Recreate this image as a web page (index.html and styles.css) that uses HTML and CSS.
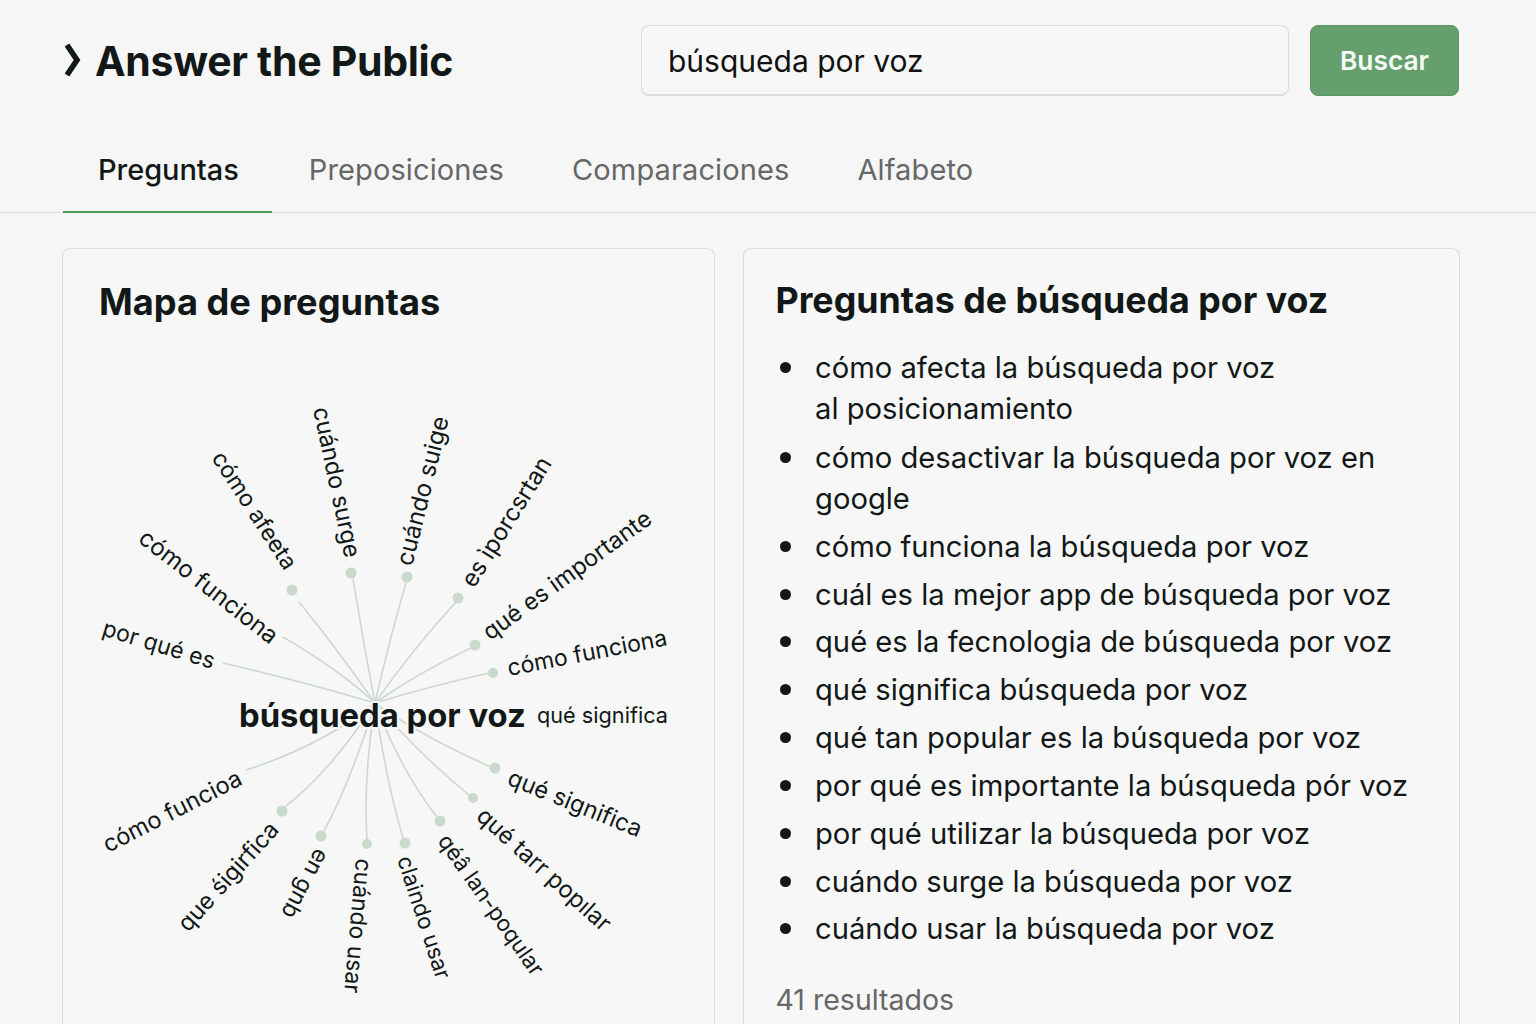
FILE: index.html
```html
<!DOCTYPE html>
<html lang="es">
<head>
<meta charset="utf-8">
<title>Answer the Public</title>
<link rel="stylesheet" href="styles.css">
</head>
<body>
<div class="page">
  <header class="topbar">
    <div class="brand">
      <svg class="brand-icon" viewBox="0 0 18 34" aria-hidden="true"><path d="M4 2 L14 17 L4 32"/></svg>
      <span class="brand-name">Answer the Public</span>
    </div>
    <form class="search">
      <div class="search-input">búsqueda por voz</div>
      <div class="search-btn">Buscar</div>
    </form>
  </header>
  <nav class="tabs">
    <a class="tab active">Preguntas</a>
    <a class="tab">Preposiciones</a>
    <a class="tab">Comparaciones</a>
    <a class="tab">Alfabeto</a>
  </nav>
  <main class="panels">
    <section class="card map-card">
      <h2 class="map-title">Mapa de preguntas</h2>
      <svg class="map" viewBox="63 340 650 690" aria-label="Mapa de preguntas">
        <g class="links">
          <path d="M374 702 Q330 640 298 601"/>
          <path d="M374 702 Q362 640 352 578"/>
          <path d="M374 702 Q388 640 405 582"/>
          <path d="M374 702 Q410 650 455 601"/>
          <path d="M374 702 Q420 670 470 647"/>
          <path d="M374 702 Q430 685 488 672"/>
          <path d="M374 702 Q340 670 282 636"/>
          <path d="M374 702 Q300 680 222 662"/>
          <path d="M374 702 Q320 745 245 769"/>
          <path d="M374 702 Q330 770 285 805"/>
          <path d="M374 702 Q350 780 323 830"/>
          <path d="M374 702 Q362 780 366 838"/>
          <path d="M374 702 Q385 780 402 837"/>
          <path d="M374 702 Q400 770 436 816"/>
          <path d="M374 702 Q420 755 468 794"/>
          <path d="M374 702 Q420 735 490 766"/>
        </g>
        <g class="dots">
          <circle cx="291" cy="589" r="5.5"/><circle cx="350" cy="572" r="5.5"/>
          <circle cx="406" cy="576" r="5.5"/><circle cx="457" cy="597" r="5.5"/>
          <circle cx="474" cy="644" r="5.5"/><circle cx="492" cy="672" r="5"/>
          <circle cx="494" cy="767" r="5.5"/><circle cx="472" cy="797" r="5"/>
          <circle cx="439" cy="820" r="5.5"/><circle cx="404" cy="842" r="5.5"/>
          <circle cx="366" cy="843" r="5"/><circle cx="320" cy="835" r="5.5"/>
          <circle cx="281" cy="810" r="5.5"/>
        </g>
        <g class="labels">
          <text transform="translate(210 457) rotate(57)">cómo afeeta</text>
          <text class="mid" transform="translate(312 408) rotate(78)">cuándo surge</text>
          <text class="wide" transform="translate(411 566) rotate(-76)">cuándo suige</text>
          <text class="wide" transform="translate(473 588) rotate(-58)">es ìporcsrtan</text>
          <text class="mid" transform="translate(489 640) rotate(-36)">qué es importante</text>
          <text transform="translate(508 675) rotate(-11)">cómo funciona</text>
          <text class="mid" transform="translate(505 783) rotate(22)">qué significa</text>
          <text class="mid" transform="translate(474 817) rotate(42)">qué tarr popılar</text>
          <text class="narrow" transform="translate(436 840) rotate(55)">qéâ lan-poqular</text>
          <text class="narrow" transform="translate(396 858) rotate(72)">claindo usar</text>
          <text transform="translate(355 857) rotate(95)">cuándo usar</text>
          <text transform="translate(315 846) rotate(118)">en gnb</text>
          <text class="mid" transform="translate(187 932) rotate(-48)">que śigirfica</text>
          <text class="mid" transform="translate(107 852) rotate(-27)">cómo funcioa</text>
          <text transform="translate(100 634) rotate(17)">por qué es</text>
          <text class="wide" transform="translate(136 540) rotate(38)">cómo funciona</text>
          <text class="flat" x="536" y="722">qué significa</text>
        </g>
        <text class="hub" x="238" y="726">búsqueda por voz</text>
      </svg>
    </section>
    <section class="card list-card">
      <h2 class="list-title">Preguntas de búsqueda por voz</h2>
      <ul class="questions">
        <li>cómo afecta la búsqueda por voz<br>al posicionamiento</li>
        <li>cómo desactivar la búsqueda por voz en google</li>
        <li>cómo funciona la búsqueda por voz</li>
        <li>cuál es la mejor app de búsqueda por voz</li>
        <li>qué es la fecnologia de búsqueda por voz</li>
        <li>qué significa búsqueda por voz</li>
        <li>qué tan popular es la búsqueda por voz</li>
        <li>por qué es importante la búsqueda pór voz</li>
        <li>por qué utilizar la búsqueda por voz</li>
        <li>cuándo surge la búsqueda por voz</li>
        <li>cuándo usar la búsqueda por voz</li>
      </ul>
      <p class="count">41 resultados</p>
    </section>
  </main>
</div>
</body>
</html>
```
FILE: styles.css
```css
* { box-sizing: border-box; }
html, body { margin: 0; padding: 0; }
body {
  background: #f5f6f5;
  color: #111817;
  font-family: Inter, "Noto Sans", sans-serif;
}
.page { height: 1024px; overflow: hidden; }

.topbar {
  display: flex;
  align-items: center;
  justify-content: space-between;
  padding: 24px 77px 0 63px;
  height: 96px;
}
.brand { display: flex; align-items: center; gap: 14px; }
.brand-icon { width: 18px; height: 34px; }
.brand-icon path { fill: none; stroke: #111817; stroke-width: 5.6; }
.brand-name { font-size: 41px; font-weight: 700; letter-spacing: -0.3px; line-height: 50px; padding-top: 2px; }

.search { display: flex; gap: 21px; }
.search-input {
  width: 648px;
  height: 71px;
  padding: 2px 26px 0;
  display: flex;
  align-items: center;
  border: 1px solid #dcdddc;
  border-bottom-width: 2px;
  border-radius: 8px;
  background: #f6f7f6;
  font-size: 30px;
  color: #111;
}
.search-btn {
  width: 149px;
  height: 71px;
  display: flex;
  align-items: center;
  justify-content: center;
  background: #669f6e;
  border: 1px solid #5b9563;
  border-radius: 8px;
  color: #f7faf7;
  font-size: 26.3px;
  font-weight: 600;
}

.tabs {
  display: flex;
  margin-top: 35px;
  padding-left: 63px;
  border-bottom: 1px solid #d9dad9;
}
.tab {
  padding: 9px 33px 0 35px;
  margin-bottom: -1px;
  font-size: 29px;
  letter-spacing: 0.12px;
  line-height: 60px;
  height: 82px;
  color: #666766;
  border-bottom: 2px solid transparent;
}
.tab.active {
  color: #111817;
  font-weight: 500;
  letter-spacing: -0.05px;
  padding-right: 33px;
  margin-right: 2px;
  border-bottom-color: #4f9a5c;
}

.panels {
  display: flex;
  gap: 28px;
  padding: 35px 76px 0 62px;
}
.card {
  background: #f6f7f6;
  border: 1px solid #dcdddc;
  border-bottom: 0;
  border-radius: 8px 8px 0 0;
  height: 800px;
}
.map-card { width: 653px; flex: none; }
.list-card { flex: 1; padding: 27px 32px 0 31.5px; }

.map-title, .list-title { margin: 0; line-height: 48px; font-weight: 700; }
.map-title { padding: 29px 36px 0; font-size: 36.2px; }
.list-title { font-size: 35.75px; }

.map { display: block; width: 650px; height: 690px; margin-top: 15px; margin-left: 1px; }
.links path { fill: none; stroke: #cdd9d0; stroke-width: 1.6; }
.dots circle { fill: #c9d9cc; }
.labels text { font-size: 23px; fill: #111817; }
.labels .narrow { font-size: 22.2px; }
.labels .mid { font-size: 23.6px; }
.labels .wide { font-size: 24px; }
.labels .flat { font-size: 21.7px; }
.hub { font-size: 32.8px; font-weight: 700; fill: #111817; stroke: #f6f7f6; stroke-width: 4px; paint-order: stroke; }

.questions { margin: 23px 0 0; padding: 0 0 0 39.5px; font-size: 29.2px; line-height: 41px; list-style: none; }
.questions li { margin-bottom: 6.85px; position: relative; }
.questions li:first-child { margin-bottom: 7.85px; }
.questions li::before {
  content: "";
  position: absolute;
  left: -35.5px;
  top: 15px;
  width: 11px;
  height: 11px;
  border-radius: 50%;
  background: #111817;
}
.count { margin: 31px 0 0; font-size: 28.5px; line-height: 40px; color: #666766; }
```
